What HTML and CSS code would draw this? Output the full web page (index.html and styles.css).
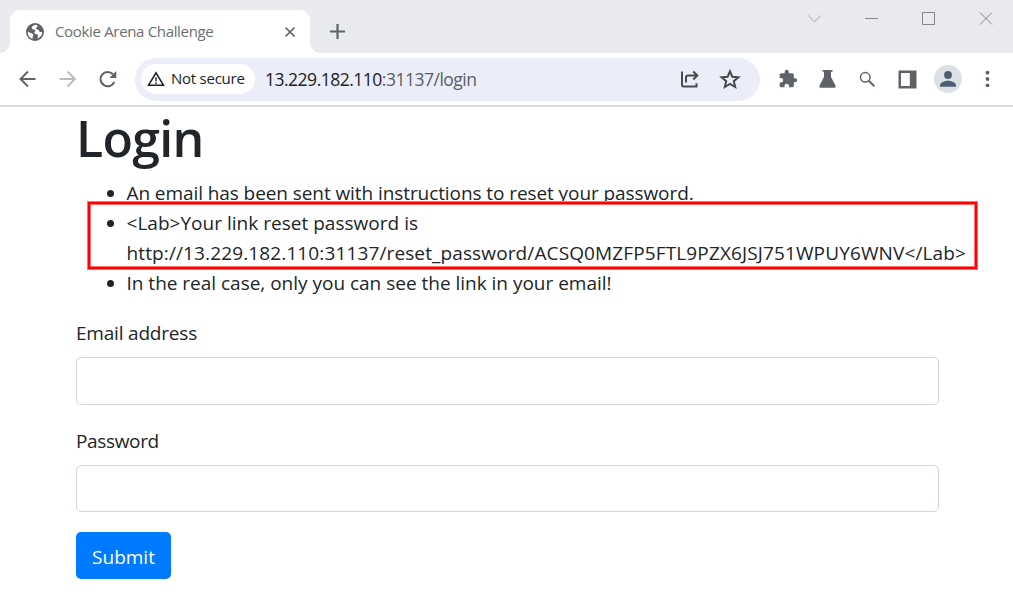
FILE: index.html
```html
<!DOCTYPE html>
<html lang="en">
<head>
<meta charset="utf-8">
<title>Cookie Arena Challenge</title>
<link rel="stylesheet" href="styles.css">
</head>
<body>
<header class="tabstrip">
  <div class="tab">
    <svg class="globe" viewBox="0 0 20 20" width="20" height="20"><circle cx="10" cy="10" r="9" fill="#5f6368"/><path d="M10.500 2.800c-3 .8-4.500 2.500-3.500 4 .8 1.200 3 .2 3.300 1.500.3 1.500-1.500 1.500-1 2.700.6 1.300 2.700.5 3.500 2 .5 1-.2 2-.5 3.500 3-1 5-3.500 5-6.500h-2c-1.500 0-1-2-2.500-2.500-1-.3-2 0-2-1s1.500-1 1.800-2c.2-.7-.6-1.300-2.100-1.700zM2.800 9.500c2 1.700 5 1.500 5.400 3.300.3 1.500-1 2-.7 4.200A7.300 7.300 0 0 1 2.800 9.500z" fill="#fff"/></svg>
    <span class="tab-title">Cookie Arena Challenge</span>
    <svg class="tab-close" viewBox="0 0 12 12" width="12" height="12"><path d="m1.500 1.500 9 9m0-9-9 9" stroke="#5f6368" stroke-width="1.700"/></svg>
  </div>
  <svg class="new-tab" viewBox="0 0 16 16" width="16" height="16"><path d="M7.500 0v15M0 7.500h15" stroke="#5f6368" stroke-width="2.200"/></svg>
  <div class="window-buttons">
    <svg viewBox="0 0 14 14" width="14" height="14"><path d="m.2 4.500 6.300 6.300L12.800 4.500" fill="none" stroke="#a2a3a6"/></svg>
    <svg viewBox="0 0 14 14" width="14" height="14"><path d="M0 7.500h13" stroke="#858689"/></svg>
    <svg viewBox="0 0 14 14" width="14" height="14"><path d="M.5 1.500h12v12h-12z" fill="none" stroke="#858689"/></svg>
    <svg viewBox="0 0 14 14" width="14" height="14"><path d="m1 1.500 12 12M13 1.500l-12 12" stroke="#858689"/></svg>
  </div>
</header>
<nav class="toolbar">
  <div class="nav-buttons">
    <svg viewBox="0 0 20 20" width="20" height="20"><path d="M17.500 10H3M10 2.500 2.500 10l7.500 7.500" fill="none" stroke="#5f6368" stroke-width="1.900"/></svg>
    <svg viewBox="0 0 20 20" width="20" height="20"><path d="M1.500 10H16M9.500 2.500 17 10l-7.500 7.500" fill="none" stroke="#babcbe" stroke-width="1.900"/></svg>
    <svg viewBox="0 0 20 20" width="20" height="20"><path d="M16.300 13A7.200 7.200 0 1 1 15 5.200" fill="none" stroke="#5f6368" stroke-width="2"/><path d="M18.300 2v7h-7z" fill="#5f6368"/></svg>
  </div>
  <div class="omnibox">
    <div class="security">
      <svg viewBox="0 0 18 16" width="18" height="16"><path d="M9 1.800 16.400 14.200H1.600z" fill="none" stroke="#202124" stroke-width="1.600"/><path d="M9 6.300v4M9 11.300v1.600" stroke="#202124" stroke-width="1.400"/></svg>
      <span class="security-text">Not secure</span>
    </div>
    <span class="url">13.229.182.110<span class="url-path">:31137/login</span></span>
    <svg class="share" viewBox="0 0 20 20" width="20" height="20"><path d="M2 2.500v13.500q0 1.500 1.500 1.500H16.500v-3.200M6 13.500V8.500q0-2 2-2h9M13.300 2.500l4 4-4 4" fill="none" stroke="#47494c" stroke-width="2"/></svg>
    <svg class="star" viewBox="0 0 22 22" width="22" height="22"><path d="m11 3.300 2.400 5.500 6 .5-4.600 3.900 1.400 5.800L11 15.900 5.800 19l1.400-5.800-4.600-3.900 6-.5z" fill="none" stroke="#47494c" stroke-width="2"/></svg>
  </div>
  <div class="extensions">
    <svg viewBox="0 0 24 24" width="20" height="20"><path fill="#5f6368" d="M20.500 11H19V7a2 2 0 0 0-2-2h-4V3.500a2.500 2.500 0 0 0-5 0V5H4a2 2 0 0 0-2 2v3.800h1.500a2.700 2.700 0 0 1 0 5.400H2V20a2 2 0 0 0 2 2h3.800v-1.500a2.700 2.700 0 0 1 5.400 0V22H17a2 2 0 0 0 2-2v-4h1.500a2.500 2.500 0 0 0 0-5z"/></svg>
    <svg viewBox="0 0 22 22" width="22" height="22"><path d="M6.500 2h10v1.700H15V9l4.500 8.500q.8 2.200-1.300 2.200H4.800q-2.100 0-1.300-2.200L8 9V3.700H6.500z" fill="#5f6368"/></svg>
    <svg viewBox="0 0 22 22" width="22" height="22"><circle cx="9.300" cy="9.300" r="4.800" fill="none" stroke="#5f6368" stroke-width="1.500"/><path d="m12.800 12.800 5.500 5.500" stroke="#5f6368" stroke-width="2"/></svg>
    <svg viewBox="0 0 22 22" width="22" height="22"><path d="M2.500 2.500h18v18h-18z" fill="#5f6368"/><path d="M5 5h8.800v13H5z" fill="#fff"/></svg>
    <svg class="avatar" viewBox="0 0 28 28" width="28" height="28"><circle cx="14" cy="14" r="14" fill="#dde1e5"/><circle cx="14" cy="10" r="3.900" fill="#4f5d73"/><path d="M6 21.700v-1.500c0-3 5-4.500 8-4.500s8 1.500 8 4.500v1.500z" fill="#4f5d73"/></svg>
    <svg class="menu" viewBox="0 0 6 18" width="6" height="18"><g fill="#5f6368"><circle cx="3.500" cy="2.700" r="1.900"/><circle cx="3.500" cy="9" r="1.900"/><circle cx="3.500" cy="15.300" r="1.900"/></g></svg>
  </div>
</nav>
<main class="page">
  <h1 class="heading">Login</h1>
  <ul class="messages">
    <li><span class="msg-sent">An email has been sent with instructions to reset your password.</span></li>
    <li><span class="msg-link">&lt;Lab&gt;Your link reset password is</span><br><span class="msg-url">http://13.229.182.110:31137/reset_password/ACSQ0MZFP5FTL9PZX6JSJ751WPUY6WNV&lt;/Lab&gt;</span></li>
    <li><span class="msg-note">In the real case, only you can see the link in your email!</span></li>
  </ul>
  <form class="form">
    <label class="label" for="email">Email address</label>
    <input class="field field-email" id="email" type="email">
    <label class="label label-password" for="password">Password</label>
    <input class="field" id="password" type="password">
    <button class="submit" type="button">Submit</button>
  </form>
  <div class="highlight"></div>
</main>
</body>
</html>
```
FILE: styles.css
```css
* { box-sizing: border-box; }
body { margin: 0; width: 1013px; height: 602px; overflow: hidden; background: #fff; color: #212529; font-family: "Open Sans", "Noto Sans", sans-serif; font-size: 19px; font-weight: 400; }
svg { display: block; flex: none; }
.tabstrip { display: flex; height: 53px; background: #e8eaed; padding-left: 10px; }
.tab { position: relative; display: flex; align-items: center; width: 300px; height: 43px; margin-top: 10px; padding: 0 14px 0 15px; background: #fff; border-radius: 10px 10px 0 0; }
.tab::before, .tab::after { content: ""; position: absolute; bottom: 0; width: 10px; height: 10px; }
.tab::before { left: -10px; background: radial-gradient(circle at 0 0, transparent 9.5px, #fff 10px); }
.tab::after { right: -10px; background: radial-gradient(circle at 100% 0, transparent 9.5px, #fff 10px); }
.tab-title { margin: -2px 0 0 10px; font-size: 15px; line-height: 20px; color: #6a6e73; white-space: nowrap; letter-spacing: -0.33px; }
.tab-close { margin-left: auto; }
.new-tab { margin: 24px 0 0 20px; }
.window-buttons { display: flex; gap: 43px; margin: 11px 20px 0 auto; }
.toolbar { display: flex; align-items: center; height: 54px; border-bottom: 2px solid #dadbdd; padding-left: 18px; }
.nav-buttons { display: flex; gap: 20px; }
.omnibox { display: flex; align-items: center; width: 625px; height: 43px; margin-left: 17px; padding-left: 6px; border-radius: 22px; background: #ebeef8; }
.security { display: flex; align-items: center; width: 114px; height: 30px; padding-left: 6px; border-radius: 15px; background: #fff; }
.security-text { margin: -2px 0 0 6px; font-size: 15px; font-weight: 480; letter-spacing: -0.25px; color: #202124; white-space: nowrap; }
.url { margin-left: 10px; font-size: 17.5px; letter-spacing: -0.5px; color: #202124; white-space: nowrap; }
.url-path { color: #5a5d62; }
.share { margin-left: auto; }
.star { margin: 0 19px 0 21px; }
.omnibox .share { margin-right: -1px; transform: translateX(1px); }
.extensions { display: flex; align-items: center; gap: 18px; margin-left: 18px; }
.avatar { margin-left: -2px; }
.menu { margin-left: 4px; }
.page { position: relative; padding: 1px 74px 0 76px; }
.heading { margin: 0 0 10px; height: 60px; line-height: 60px; font-size: 50px; font-weight: 560; letter-spacing: -0.7px; }
.messages { margin: 0 -60px 0 0; padding-left: 50.500px; line-height: 30px; white-space: nowrap; }
.msg-sent { letter-spacing: -0.08px; }
.msg-link { letter-spacing: 0.02px; }
.msg-url { letter-spacing: 0.125px; }
.msg-note { letter-spacing: -0.01px; }
.form { display: flex; flex-direction: column; align-items: flex-start; padding-top: 20px; }
.label { height: 30px; line-height: 30px; letter-spacing: -0.2px; }
.label-password { margin-top: 21px; letter-spacing: -0.35px; }
.field { width: 863px; height: 47px; margin: 9px 0 0; border: 1px solid #ced4da; border-radius: 5px; background: #fff; }
.field-email { height: 48px; }
.submit { width: 95px; height: 47px; margin-top: 20px; padding: 0; border: 0; border-radius: 5px; background: #007bff; color: #fff; font: 400 19px/50px "Open Sans", sans-serif; }
.highlight { position: absolute; left: 88px; top: 95px; width: 889px; height: 67px; border: 2px solid #f00; box-shadow: 0 0 0 1px #ff7070, inset 0 0 0 1px #ff7070; }
```
